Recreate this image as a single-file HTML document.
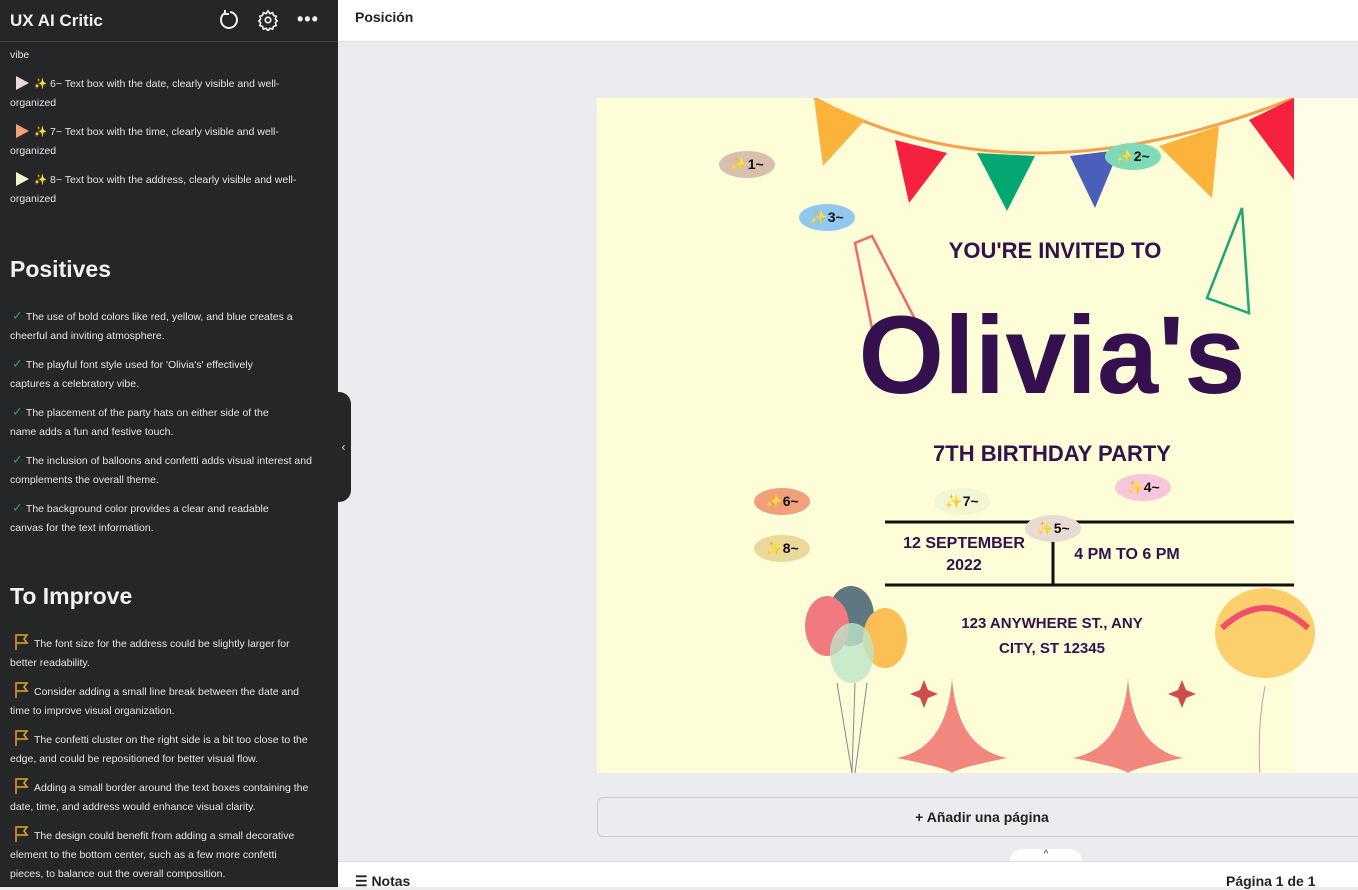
<!DOCTYPE html>
<html><head><meta charset="utf-8"><style>
*{margin:0;padding:0;box-sizing:border-box}
body{width:1358px;height:887px;overflow:hidden;font-family:"Liberation Sans",sans-serif;background:#ebecf0;position:relative}
#side{position:absolute;left:0;top:0;width:338px;height:887px;background:#252627;color:#e6e6e6;overflow:hidden}
#hdr{height:42px;border-bottom:1px solid #444;display:flex;align-items:center;padding-left:10px;font-weight:bold;font-size:17px;color:#f0f0f0}
.it{position:absolute;left:10px;width:302px;font-size:10.5px;line-height:19px;color:#e6e6e6}
.h{position:absolute;left:10px;font-size:23px;font-weight:bold;color:#f2f2f2}
.tri{display:inline-block;width:0;height:0;border-top:7px solid transparent;border-bottom:7px solid transparent;border-left:13px solid;vertical-align:-3px;margin:0 5px 0 6px}
.ck{color:#2eaa3c;font-size:13px;margin:0 3px 0 2px}
.fl{display:inline-block;margin:0 4px 0 4px;vertical-align:-3px}
#top{position:absolute;left:338px;top:0;right:0;height:42px;background:#fff;border-bottom:1px solid #ddd;font-size:14px;font-weight:bold;color:#222;padding:9px 0 0 17px}
#canvas{position:absolute;left:597px;top:98px;width:761px;height:675px;background:#fdfdd7;overflow:hidden}
.b{position:absolute;height:27px;border-radius:50%;font-size:14px;font-weight:bold;color:#111;display:flex;align-items:center;justify-content:center;width:56px}
#add{position:absolute;left:597px;top:797px;width:770px;height:40px;border:1px solid #ccc;border-radius:6px;background:#ebecf0;text-align:center;font-size:14px;font-weight:bold;line-height:38px;color:#222}
#bot{position:absolute;left:338px;top:861px;right:0;height:26px;background:#fff;border-top:1px solid #ddd;font-size:14px;font-weight:bold;color:#222}
.pur{fill:#35104f;font-family:"Liberation Sans",sans-serif;font-weight:bold}
</style></head><body>
<div id="side">
<div id="hdr">UX AI Critic
<svg style="position:absolute;left:219px;top:9px" width="22" height="22" viewBox="0 0 22 22" fill="none" stroke="#eee" stroke-width="2"><path d="M6 4A8 8 0 1 0 11 3"/><path d="M6 1v4h4"/></svg>
<svg style="position:absolute;left:257px;top:9px" width="22" height="22" viewBox="0 0 24 24" fill="none" stroke="#eee" stroke-width="1.8"><circle cx="12" cy="12" r="3"/><path d="M12 2l2 3 3-1 1 3 3 1-1 3 2 2-2 2 1 3-3 1-1 3-3-1-2 3-2-3-3 1-1-3-3-1 1-3-2-2 2-2-1-3 3-1 1-3 3 1z"/></svg>
<span style="position:absolute;left:297px;top:9px;font-size:18px;letter-spacing:1px">•••</span>
</div>
<div class="it" style="top:46px">vibe</div>
<div class="it" style="top:75px"><span class="tri" style="color:#ecd8d8"></span>✨ 6~ Text box with the date, clearly visible and well-organized</div>
<div class="it" style="top:123px"><span class="tri" style="color:#f4a07a"></span>✨ 7~ Text box with the time, clearly visible and well-organized</div>
<div class="it" style="top:171px"><span class="tri" style="color:#f3f6c8"></span>✨ 8~ Text box with the address, clearly visible and well-organized</div>
<div class="h" style="top:256px">Positives</div>
<div class="it" style="top:306px"><span class="ck">✓</span>The use of bold colors like red, yellow, and blue creates a cheerful and inviting atmosphere.</div>
<div class="it" style="top:354px"><span class="ck">✓</span>The playful font style used for 'Olivia's' effectively<br>captures a celebratory vibe.</div>
<div class="it" style="top:402px"><span class="ck">✓</span>The placement of the party hats on either side of the<br>name adds a fun and festive touch.</div>
<div class="it" style="top:450px"><span class="ck">✓</span>The inclusion of balloons and confetti adds visual interest and complements the overall theme.</div>
<div class="it" style="top:498px"><span class="ck">✓</span>The background color provides a clear and readable<br>canvas for the text information.</div>
<div class="h" style="top:583px">To Improve</div>
<div class="it" style="top:634px"><svg class="fl" width="16" height="16" viewBox="0 0 16 16" fill="none" stroke="#f0a020" stroke-width="1.5"><path d="M2 16V1h11l-3 4 3 4H2"/></svg>The font size for the address could be slightly larger for better readability.</div>
<div class="it" style="top:682px"><svg class="fl" width="16" height="16" viewBox="0 0 16 16" fill="none" stroke="#f0a020" stroke-width="1.5"><path d="M2 16V1h11l-3 4 3 4H2"/></svg>Consider adding a small line break between the date and time to improve visual organization.</div>
<div class="it" style="top:730px"><svg class="fl" width="16" height="16" viewBox="0 0 16 16" fill="none" stroke="#f0a020" stroke-width="1.5"><path d="M2 16V1h11l-3 4 3 4H2"/></svg>The confetti cluster on the right side is a bit too close to the edge, and could be repositioned for better visual flow.</div>
<div class="it" style="top:778px"><svg class="fl" width="16" height="16" viewBox="0 0 16 16" fill="none" stroke="#f0a020" stroke-width="1.5"><path d="M2 16V1h11l-3 4 3 4H2"/></svg>Adding a small border around the text boxes containing the date, time, and address would enhance visual clarity.</div>
<div class="it" style="top:826px"><svg class="fl" width="16" height="16" viewBox="0 0 16 16" fill="none" stroke="#f0a020" stroke-width="1.5"><path d="M2 16V1h11l-3 4 3 4H2"/></svg>The design could benefit from adding a small decorative element to the bottom center, such as a few more confetti pieces, to balance out the overall composition.</div>
</div>
<div style="position:absolute;left:336px;top:392px;width:15px;height:110px;background:#252627;border-radius:0 12px 12px 0;color:#ddd;font-size:12px;line-height:110px;text-align:center">‹</div>
<div id="top">Posición</div>
<div id="canvas">
<svg width="761" height="675" style="position:absolute;left:0;top:0">
<rect x="697" y="0" width="64" height="675" fill="#fefee8"/>
<path d="M217 0 Q420 110 697 0" stroke="#f7a04a" stroke-width="3" fill="none"/>
<polygon points="217,0 268,22 226,68" fill="#fbb33c"/>
<polygon points="298,42 350,55 312,105" fill="#f5213f"/>
<polygon points="380,55 438,58 410,113" fill="#04a772"/>
<polygon points="473,58 522,52 498,110" fill="#4a5fb9"/>
<polygon points="562,48 622,28 615,100" fill="#fbb33c"/>
<polygon points="652,22 697,0 697,82" fill="#f5213f"/>
<polygon points="258,145 275,138 320,225 276,235" fill="none" stroke="#ef6a6a" stroke-width="2.5"/>
<polygon points="645,110 610,200 652,215" fill="none" stroke="#1fa57c" stroke-width="2.5"/>
<text x="458" y="160" text-anchor="middle" class="pur" font-size="22">YOU'RE INVITED TO</text>
<text x="455" y="295" text-anchor="middle" class="pur" font-size="110" font-family="Liberation Serif">Olivia's</text>
<text x="455" y="363" text-anchor="middle" class="pur" font-size="22">7TH BIRTHDAY PARTY</text>
<path d="M288 424H697M288 487H697M456 424V487" stroke="#111" stroke-width="3"/>
<text x="367" y="450" text-anchor="middle" class="pur" font-size="16">12 SEPTEMBER</text>
<text x="367" y="472" text-anchor="middle" class="pur" font-size="16">2022</text>
<text x="530" y="461" text-anchor="middle" class="pur" font-size="16">4 PM TO 6 PM</text>
<text x="455" y="530" text-anchor="middle" class="pur" font-size="15">123 ANYWHERE ST., ANY</text>
<text x="455" y="555" text-anchor="middle" class="pur" font-size="15">CITY, ST 12345</text>
<ellipse cx="254" cy="518" rx="23" ry="30" fill="#5f7780"/>
<ellipse cx="230" cy="528" rx="22" ry="30" fill="#f07a80"/>
<ellipse cx="288" cy="540" rx="22" ry="30" fill="#fbbf55"/>
<ellipse cx="255" cy="555" rx="22" ry="30" fill="#bde5c8" opacity=".8"/>
<path d="M240 585L255 675M258 585L255 675M270 585L258 675" stroke="#889" fill="none"/>
<ellipse cx="668" cy="535" rx="50" ry="45" fill="#fbcf6c"/>
<path d="M625 530Q668 490 711 530" stroke="#f04e6a" stroke-width="6" fill="none"/>
<path d="M668 588Q660 630 663 675" stroke="#c9a" fill="none"/>
<path d="M355 580Q360 650 410 660Q360 670 355 675Q350 670 300 660Q350 650 355 580Z" fill="#f2877e"/>
<path d="M531 580Q536 650 586 660Q536 670 531 675Q526 670 476 660Q526 650 531 580Z" fill="#f2877e"/>
<path d="M327 582l4 10 10 4-10 4-4 10-4-10-10-4 10-4z" fill="#d04c4c"/>
<path d="M585 582l4 10 10 4-10 4-4 10-4-10-10-4 10-4z" fill="#d04c4c"/>
</svg>
<div class="b" style="left:122px;top:53px;background:#d8c0ae">✨1~</div>
<div class="b" style="left:508px;top:45px;background:#7edab8">✨2~</div>
<div class="b" style="left:202px;top:106px;background:#90c8f0">✨3~</div>
<div class="b" style="left:518px;top:376px;background:#f8c6dc">✨4~</div>
<div class="b" style="left:428px;top:417px;background:#e8dbd6">✨5~</div>
<div class="b" style="left:157px;top:390px;background:#f0a07a">✨6~</div>
<div class="b" style="left:337px;top:390px;background:#f2f6d2">✨7~</div>
<div class="b" style="left:157px;top:437px;background:#ead99a">✨8~</div>
</div>
<div id="add">+ Añadir una página</div>
<div style="position:absolute;left:1010px;top:849px;width:72px;height:13px;background:#fff;border-radius:12px 12px 0 0;text-align:center;font-size:10px;color:#333">^</div>
<div id="bot"><span style="position:absolute;left:17px;top:11px">☰ Notas</span><span style="position:absolute;left:888px;top:11px">Página 1 de 1</span></div>
</body></html>
